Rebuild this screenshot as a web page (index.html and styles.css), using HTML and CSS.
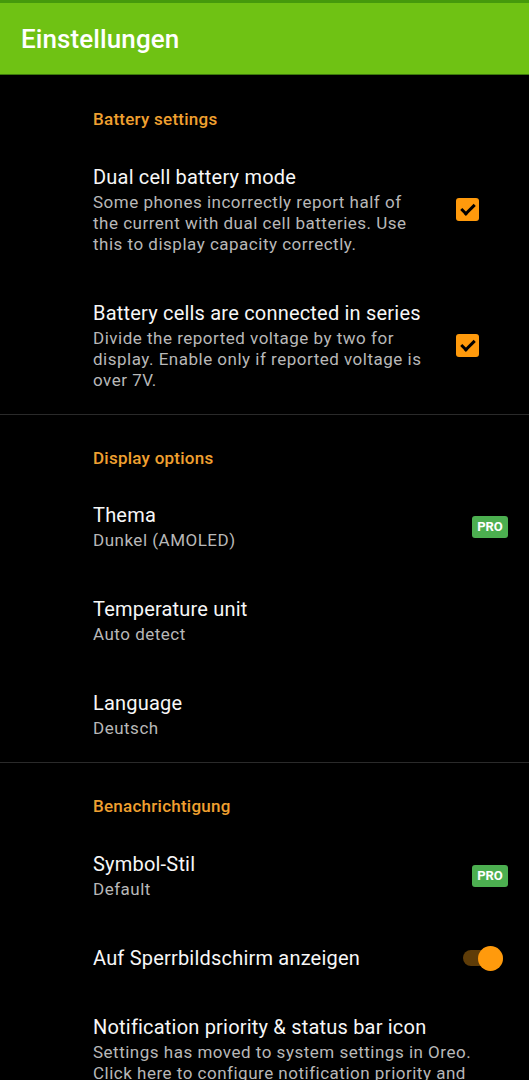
FILE: index.html
```html
<!DOCTYPE html>
<html lang="de">
<head>
    <meta charset="UTF-8">
    <meta name="viewport" content="width=device-width, initial-scale=1.0">
    <title>Einstellungen</title>
    <link rel="stylesheet" href="styles.css">
</head>
<body>
    <header class="app-bar">
        <h1>Einstellungen</h1>
    </header>

    <section class="group">
        <h2 class="category">Battery settings</h2>
        <div class="pref">
            <div class="pref-text">
                <div class="pref-title">Dual cell battery mode</div>
                <div class="pref-summary">Some phones incorrectly report half of the current with dual cell batteries. Use this to display capacity correctly.</div>
            </div>
            <div class="widget"><span class="checkbox checked"></span></div>
        </div>
        <div class="pref">
            <div class="pref-text">
                <div class="pref-title">Battery cells are connected in series</div>
                <div class="pref-summary">Divide the reported voltage by two for display. Enable only if reported voltage is over 7V.</div>
            </div>
            <div class="widget"><span class="checkbox checked"></span></div>
        </div>
    </section>

    <section class="group">
        <h2 class="category">Display options</h2>
        <div class="pref">
            <div class="pref-text">
                <div class="pref-title">Thema</div>
                <div class="pref-summary">Dunkel (AMOLED)</div>
            </div>
            <div class="widget"><span class="badge">PRO</span></div>
        </div>
        <div class="pref">
            <div class="pref-text">
                <div class="pref-title">Temperature unit</div>
                <div class="pref-summary">Auto detect</div>
            </div>
        </div>
        <div class="pref">
            <div class="pref-text">
                <div class="pref-title">Language</div>
                <div class="pref-summary">Deutsch</div>
            </div>
        </div>
    </section>

    <section class="group">
        <h2 class="category">Benachrichtigung</h2>
        <div class="pref">
            <div class="pref-text">
                <div class="pref-title">Symbol-Stil</div>
                <div class="pref-summary">Default</div>
            </div>
            <div class="widget"><span class="badge">PRO</span></div>
        </div>
        <div class="pref single">
            <div class="pref-text">
                <div class="pref-title">Auf Sperrbildschirm anzeigen</div>
            </div>
            <div class="widget"><span class="switch on"></span></div>
        </div>
        <div class="pref">
            <div class="pref-text">
                <div class="pref-title">Notification priority &amp; status bar icon</div>
                <div class="pref-summary">Settings has moved to system settings in Oreo. Click here to configure notification priority and status bar icon.</div>
            </div>
        </div>
    </section>
</body>
</html>
```

FILE: styles.css
```css
body {
    font-family: Roboto, "Noto Sans", sans-serif;
    margin: 0;
    padding: 0;
    background-color: #000;
    color: #fff;
    overflow: hidden;
}

.app-bar {
    background-color: #6fc214;
    border-top: 3px solid #459a0c;
    border-bottom: 1px solid #3d7a0c;
    height: 71px;
    display: flex;
    align-items: center;
    padding: 0 21px;
}

.app-bar h1 {
    margin: 0;
    font-size: 26px;
    font-weight: 500;
    letter-spacing: 0.1px;
    color: #fff;
}

.group {
    border-bottom: 1px solid #2a2a2a;
}

.category {
    margin: 0;
    padding: 34px 0 12.5px 93px;
    font-size: 17px;
    line-height: 20px;
    font-weight: 500;
    letter-spacing: 0.25px;
    color: #f0a030;
}

.group + .group .category {
    padding-top: 33px;
}

.pref {
    display: flex;
    align-items: center;
    padding: 23px 21px 23px 93px;
}

.pref.single {
    padding-top: 23.5px;
    padding-bottom: 21.5px;
}

.pref-text {
    flex: 1;
    padding-right: 16px;
}

.pref-title {
    font-size: 20px;
    line-height: 24px;
    letter-spacing: 0.2px;
    color: #f7f7f7;
}

.pref-summary {
    font-size: 17px;
    line-height: 21px;
    letter-spacing: 0.5px;
    color: #b8b8b8;
    margin-top: 3px;
}

.widget {
    width: 67px;
    display: flex;
    justify-content: flex-end;
}

.checkbox {
    width: 23px;
    height: 23px;
    border-radius: 3px;
    background-color: #ff9a0c;
    position: relative;
    margin-right: 29px;
}

.checkbox.checked::after {
    content: "";
    position: absolute;
    left: 8px;
    top: 3px;
    width: 5px;
    height: 11px;
    border: solid #000;
    border-width: 0 3px 3px 0;
    transform: rotate(45deg);
}

.badge {
    background-color: #4caf50;
    color: #fff;
    font-size: 13px;
    font-weight: 700;
    width: 36px;
    height: 22px;
    line-height: 22px;
    text-align: center;
    border-radius: 3px;
}

.switch {
    width: 40px;
    height: 16px;
    border-radius: 8px;
    background-color: #5e3c08;
    position: relative;
    margin-right: 5px;
}

.switch.on::after {
    content: "";
    position: absolute;
    right: 0;
    top: -4.5px;
    width: 25px;
    height: 25px;
    border-radius: 50%;
    background-color: #ff9a0c;
}
```
